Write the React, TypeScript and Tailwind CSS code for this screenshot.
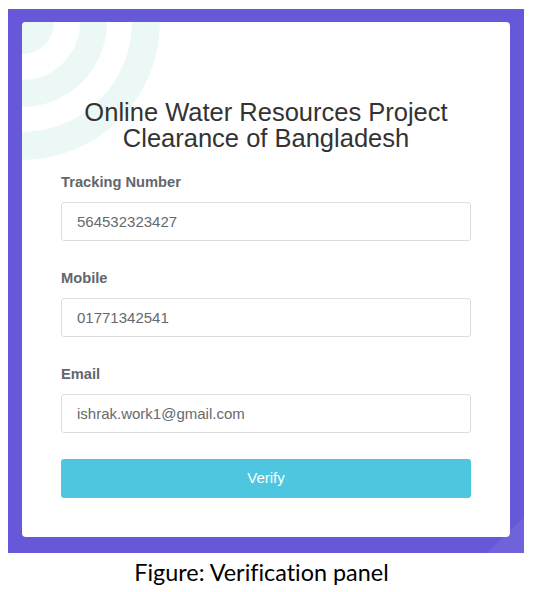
import React from "react";

const fields = [
  { label: "Tracking Number", value: "564532323427" },
  { label: "Mobile", value: "01771342541" },
  { label: "Email", value: "ishrak.work1@gmail.com" },
];

export default function App() {
  return (
    <div className="w-[533px] h-[592px] bg-white flex flex-col overflow-hidden">
      <div className="relative ml-[8px] mt-[9px] w-[516px] h-[544px] bg-[#6658d8] pl-[14px] pr-[14px] pt-[13px] pb-[16px]">
        <svg className="absolute inset-0" width="516" height="544" viewBox="0 0 516 544" aria-hidden="true">
          <polygon points="479,544 516,508 516,544" fill="#7062da" />
        </svg>
        <div
          className="relative w-[488px] h-[515px] bg-white rounded-[4px] overflow-hidden px-[39px] pt-[77px]"
          style={{ fontFamily: '"Liberation Sans", Arial, sans-serif' }}
        >
          <svg className="absolute left-0 top-0" width="140" height="140" viewBox="0 0 140 140" aria-hidden="true">
            <path d="M0 0 H32 A32 32 0 0 1 0 32 Z" fill="#ebf8f5" />
            <path d="M71.5 0 A71.5 71.5 0 0 1 0 71.5" fill="none" stroke="#ebf8f5" strokeWidth="27" />
            <path d="M124 0 A124 124 0 0 1 0 124" fill="none" stroke="#ebf8f5" strokeWidth="28" />
          </svg>
          <h1 className="relative text-center text-[25.5px] leading-[26px] text-[#333333] font-normal">
            Online Water Resources Project
            <br />
            Clearance of Bangladesh
          </h1>
          <div className="relative mt-[21px] flex flex-col gap-[27px]">
            {fields.map((f) => (
              <div key={f.label} className="flex flex-col">
                <label className="h-[20px] text-[14.7px] leading-[20px] font-bold text-[#62666b]">{f.label}</label>
                <input
                  readOnly
                  value={f.value}
                  className="mt-[10px] h-[39px] w-full rounded-[3px] border border-[#d9dde2] bg-white pl-[15px] text-[15px] text-[#666a6e] outline-none"
                />
              </div>
            ))}
          </div>
          <button className="relative mt-[26px] h-[39px] w-full rounded-[3px] bg-[#4fc6e0] text-[15px] text-white">
            Verify
          </button>
        </div>
      </div>
      <div
        className="mt-[5px] pr-[10px] text-center text-[23.4px] leading-[28px] text-black [font-variant-ligatures:none]"
        style={{ fontFamily: 'Lato, "Open Sans", sans-serif' }}
      >
        Figure: Verification panel
      </div>
    </div>
  );
}
